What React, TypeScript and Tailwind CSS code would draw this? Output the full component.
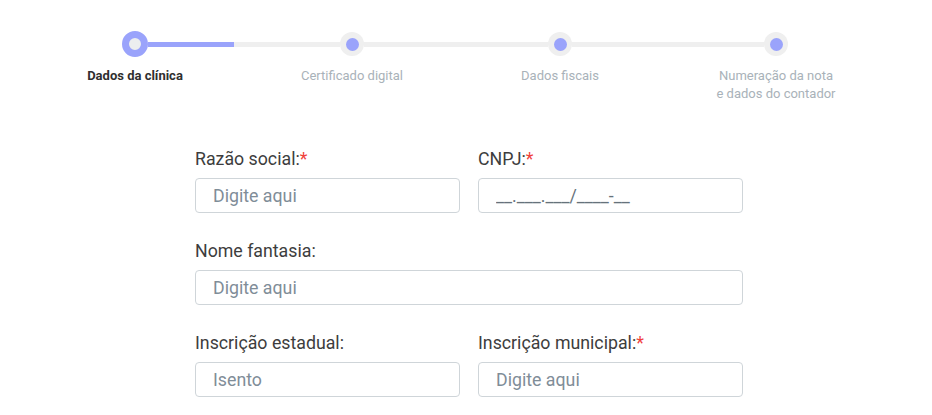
import React from 'react'

type Step = {
  label: React.ReactNode
  active?: boolean
}

const steps: Step[] = [
  { label: 'Dados da clínica', active: true },
  { label: 'Certificado digital' },
  { label: 'Dados fiscais' },
  {
    label: (
      <>
        Numeração da nota
        <br />e dados do contador
      </>
    ),
  },
]

// gaps between circle edges, px
const connectors = ['w-[192px]', 'w-[184px]', 'w-[192px]']

function StepDot({ step }: { step: Step }) {
  return (
    <div className={`flex flex-col items-center ${step.active ? 'w-[26px]' : 'w-[24px]'}`}>
      <div className="flex h-[26px] items-center">
        {step.active ? (
          <div className="h-[26px] w-[26px] rounded-full border-[7px] border-[#9aa3fb] bg-[#eceeef]" />
        ) : (
          <div className="flex h-[24px] w-[24px] items-center justify-center rounded-full bg-[#efefef]">
            <div className="h-[13px] w-[13px] rounded-full bg-[#9aa3fb]" />
          </div>
        )}
      </div>
      <div
        className={`mt-[10px] whitespace-nowrap text-center text-[13px] leading-[18px] ${
          step.active ? 'font-bold text-[#2f2f2f]' : 'text-[#a9b2b9]'
        }`}
      >
        {step.label}
      </div>
    </div>
  )
}

function Field({
  label,
  required,
  placeholder,
  wide,
  mask,
}: {
  label: string
  required?: boolean
  placeholder: string
  wide?: boolean
  mask?: boolean
}) {
  return (
    <label className={`block ${wide ? 'col-span-2' : ''}`}>
      <span className="mb-[8px] block text-[17.75px] leading-[21px] text-[#3d3d3d]">
        {label}
        {required ? <span className="text-[#f0413b]">*</span> : null}
      </span>
      <input
        placeholder={placeholder}
        className={`block h-[35px] w-full rounded-[4px] border border-[#cfd5d9] bg-white px-[17px] text-[17.75px] outline-none ${
          mask ? 'placeholder:text-[#66727b]' : 'placeholder:text-[#7f8d98]'
        }`}
      />
    </label>
  )
}

export default function App() {
  return (
    <div className="h-[415px] w-[932px] overflow-hidden bg-white font-['Roboto',sans-serif]">
      <div className="flex items-start pl-[122px] pt-[31px]">
        {steps.map((step, index) => (
          <React.Fragment key={index}>
            <StepDot step={step} />
            {index < connectors.length ? (
              <div className={`flex h-[26px] flex-none items-center ${connectors[index]}`}>
                <div className="h-[5px] w-full bg-[#efefef]">
                  {index === 0 ? <div className="h-full w-[86px] bg-[#9aa3fb]" /> : null}
                </div>
              </div>
            ) : null}
          </React.Fragment>
        ))}
      </div>

      <div className="ml-[195px] mt-[46px] grid w-[548px] grid-cols-2 gap-x-[18px] gap-y-[28px]">
        <Field label="Razão social:" required placeholder="Digite aqui" />
        <Field label="CNPJ:" required placeholder="__.___.___/____-__" mask />
        <Field label="Nome fantasia:" placeholder="Digite aqui" wide />
        <Field label="Inscrição estadual:" placeholder="Isento" />
        <Field label="Inscrição municipal:" required placeholder="Digite aqui" />
      </div>
    </div>
  )
}
